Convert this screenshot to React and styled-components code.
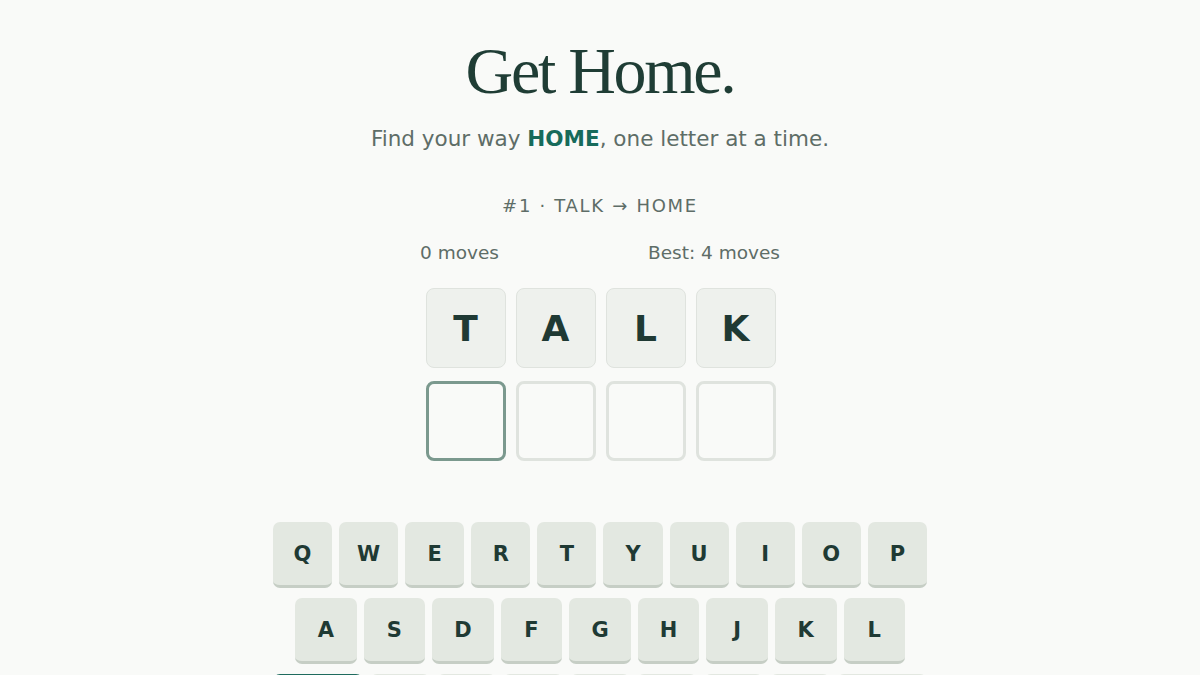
import React from "react";
import styled, { createGlobalStyle } from "styled-components";

const GlobalStyle = createGlobalStyle`
  html, body {
    margin: 0;
    padding: 0;
    background: #f9faf8;
  }
  body {
    font-family: "DejaVu Sans", "Noto Sans", sans-serif;
    color: #1f3a34;
  }
  * { box-sizing: border-box; }
`;

const Page = styled.main`
  display: flex;
  flex-direction: column;
  align-items: center;
  padding-top: 31px;
  min-height: 675px;
`;

const Title = styled.h1`
  margin: 0;
  font-family: "Liberation Serif", "Times New Roman", serif;
  font-weight: 400;
  font-size: 66px;
  line-height: 80px;
  letter-spacing: -0.035em;
  color: #1f3d35;
`;

const Tagline = styled.p`
  margin: 13px 0 0;
  font-size: 21.5px;
  line-height: 30px;
  color: #5e6d67;
`;

const Accent = styled.strong`
  color: #176b5b;
  font-weight: 700;
`;

const Puzzle = styled.div`
  margin-top: 40px;
  font-size: 18px;
  line-height: 24px;
  letter-spacing: 1.7px;
  color: #5e6d67;
`;

const Stats = styled.div`
  margin-top: 23px;
  width: 360px;
  display: flex;
  justify-content: space-between;
  font-size: 18.5px;
  line-height: 24px;
  color: #5e6d67;
`;

const Board = styled.div`
  margin-top: 23px;
  margin-left: 1px;
  display: grid;
  grid-template-columns: repeat(4, 80px);
  column-gap: 10px;
  row-gap: 13px;
`;

const Tile = styled.div`
  width: 80px;
  height: 80px;
  border-radius: 8px;
  display: flex;
  align-items: center;
  justify-content: center;
  font-size: 36px;
  font-weight: 700;
  color: #1f3a34;
  background: ${(p) => (p.$filled ? "#eef1ed" : "transparent")};
  border: ${(p) =>
    p.$filled
      ? "1.5px solid #dfe3de"
      : p.$active
      ? "3px solid #7b998e"
      : "3px solid #dfe3de"};
`;

const Keyboard = styled.div`
  margin-top: 61px;
  width: 654px;
  display: flex;
  flex-direction: column;
  gap: 10px;
`;

const KeyRow = styled.div`
  display: flex;
  gap: 7px;
  padding: 0 ${(p) => p.$inset || 0}px;
`;

const Key = styled.button`
  flex: ${(p) => (p.$wide ? 1.5 : 1)} 1 0;
  height: 66px;
  border: none;
  border-bottom: 3px solid ${(p) => (p.$primary ? "#134c42" : "#c6cec5")};
  border-radius: 7px;
  background: ${(p) => (p.$primary ? "#1f6b5e" : "#e3e8e1")};
  color: ${(p) => (p.$primary ? "#ffffff" : "#1f3a34")};
  font-family: "DejaVu Sans", sans-serif;
  font-size: ${(p) => (p.$wide ? "15px" : "21px")};
  font-weight: 700;
  display: flex;
  align-items: center;
  justify-content: center;
  padding: 0;
  cursor: pointer;
`;

const rows = [
  { keys: "QWERTYUIOP".split(""), inset: 0 },
  { keys: "ASDFGHJKL".split(""), inset: 22 },
];

export default function App() {
  const start = ["T", "A", "L", "K"];
  return (
    <>
      <GlobalStyle />
      <Page>
        <Title>Get Home.</Title>
        <Tagline>
          Find your way <Accent>HOME</Accent>, one letter at a time.
        </Tagline>
        <Puzzle>#1 · TALK → HOME</Puzzle>
        <Stats>
          <span>0 moves</span>
          <span>Best: 4 moves</span>
        </Stats>
        <Board>
          {start.map((l, i) => (
            <Tile key={"s" + i} $filled>
              {l}
            </Tile>
          ))}
          {[0, 1, 2, 3].map((i) => (
            <Tile key={"e" + i} $active={i === 0} />
          ))}
        </Board>
        <Keyboard>
          {rows.map((r, ri) => (
            <KeyRow key={ri} $inset={r.inset}>
              {r.keys.map((k) => (
                <Key key={k}>{k}</Key>
              ))}
            </KeyRow>
          ))}
          <KeyRow>
            <Key $wide $primary>ENTER</Key>
            {"ZXCVBNM".split("").map((k) => (
              <Key key={k}>{k}</Key>
            ))}
            <Key $wide aria-label="Backspace">
              <svg width="24" height="24" viewBox="0 0 24 24" fill="none" stroke="currentColor" strokeWidth="2" strokeLinecap="round" strokeLinejoin="round">
                <path d="M10 5a2 2 0 0 0-1.344.519l-6.328 5.74a1 1 0 0 0 0 1.481l6.328 5.741A2 2 0 0 0 10 19h10a2 2 0 0 0 2-2V7a2 2 0 0 0-2-2z" />
                <path d="m12 9 6 6" />
                <path d="m18 9-6 6" />
              </svg>
            </Key>
          </KeyRow>
        </Keyboard>
      </Page>
    </>
  );
}
